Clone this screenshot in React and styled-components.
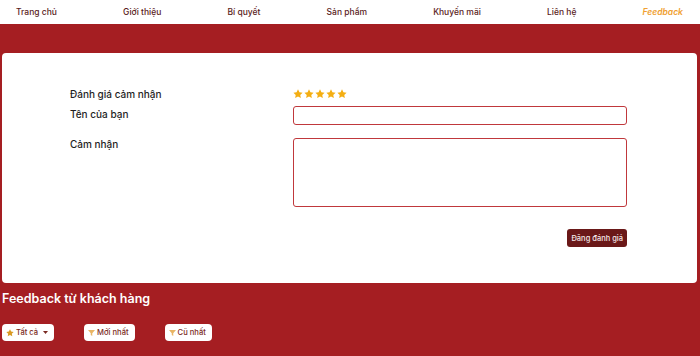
import React from "react";
import styled, { createGlobalStyle } from "styled-components";

const Global = createGlobalStyle`
  html, body { margin: 0; padding: 0; }
  body {
    background: #a51e22;
    font-family: Inter, "Noto Sans", sans-serif;
    min-height: 356px;
  }
  * { box-sizing: border-box; }
`;

const Nav = styled.nav`
  height: 24px;
  background: #fff;
  display: flex;
  align-items: center;
  justify-content: space-between;
  padding: 0 17px 0 16px;
`;

const NavLink = styled.a`
  font-size: 8.5px;
  color: ${(p) => (p.$active ? "#f0a030" : "#5a1c1c")};
  font-style: ${(p) => (p.$active ? "italic" : "normal")};
  font-weight: ${(p) => (p.$active ? 600 : 500)};
  text-decoration: none;
`;

const Main = styled.main`
  padding: 29px 3px 0 2px;
`;

const Card = styled.section`
  background: #fff;
  border-radius: 4px;
  height: 230px;
  padding: 35px 70px 0 68px;
  display: flex;
  flex-direction: column;
`;

const Form = styled.div`
  display: grid;
  grid-template-columns: 223px 1fr;
`;

const Label = styled.div`
  font-size: 10px;
  font-weight: 500;
  color: #1e1e1e;
  line-height: 12px;
  padding-top: ${(p) => p.$top || 0}px;
`;

const Stars = styled.div`
  display: flex;
  align-items: center;
  gap: 1px;
  height: 11px;
  margin-bottom: 7px;
`;

const Input = styled.div`
  height: 19px;
  border: 1px solid #c0383c;
  border-radius: 3px;
  margin-bottom: 13px;
`;

const TextArea = styled.div`
  height: 69px;
  border: 1px solid #c0383c;
  border-radius: 3px;
`;

const Actions = styled.div`
  display: flex;
  justify-content: flex-end;
  margin-top: 22px;
`;

const SubmitButton = styled.button`
  height: 18px;
  padding: 0 4px;
  background: #6a1818;
  color: #f4e8e8;
  font-family: Inter, sans-serif;
  font-size: 7.5px;
  font-weight: 500;
  border: none;
  border-radius: 3px;
`;

const Heading = styled.h2`
  margin: 8px 0 0 0;
  color: #fff;
  font-size: 12.5px;
  font-weight: 600;
  line-height: 16px;
`;

const Filters = styled.div`
  display: flex;
  gap: 30px;
  margin-top: 17px;
`;

const FilterButton = styled.button`
  height: 17px;
  background: #fff;
  border: none;
  border-radius: 4px;
  display: flex;
  align-items: center;
  gap: 2px;
  padding: 0 6px 0 4px;
  font-family: Inter, sans-serif;
  font-size: 7.6px;
  font-weight: 500;
  white-space: nowrap;
  color: #7a2a22;
`;

const CaretWrap = styled.span`
  display: flex;
  margin-left: 3px;
`;

const Star = ({ size = 10, color = "#f4ae12" }) => (
  <svg width={size} height={size} viewBox="0 0 24 24">
    <path
      fill={color}
      d="M12 0.8l3.4 7 7.6 1-5.6 5.3 1.5 7.6L12 18l-6.9 3.7 1.5-7.6L1 8.8l7.6-1z"
    />
  </svg>
);

const Caret = ({ color = "#7a2a22", w = 5 }) => (
  <svg width={w} height={w * 0.6} viewBox="0 0 10 6">
    <path fill={color} d="M0 0h10L5 6z" />
  </svg>
);

const Funnel = () => (
  <svg width="7" height="6" viewBox="0 0 14 12">
    <path fill="#e9b565" d="M0 0h14L8.5 6.5V12L5.5 10V6.5z" />
  </svg>
);

const links = ["Trang chủ", "Giới thiệu", "Bí quyết", "Sản phẩm", "Khuyến mãi", "Liên hệ"];

export default function App() {
  return (
    <>
      <Global />
      <Nav>
        {links.map((l) => (
          <NavLink key={l}>{l}</NavLink>
        ))}
        <NavLink $active>Feedback</NavLink>
      </Nav>
      <Main>
        <Card>
          <Form>
            <Label $top={0}>Đánh giá cảm nhận</Label>
            <Stars>
              {[0, 1, 2, 3, 4].map((i) => (
                <Star key={i} />
              ))}
            </Stars>
            <Label $top={2}>Tên của bạn</Label>
            <Input />
            <Label $top={-1}>Cảm nhận</Label>
            <TextArea />
          </Form>
          <Actions>
            <SubmitButton>Đăng đánh giá</SubmitButton>
          </Actions>
        </Card>
        <Heading>Feedback từ khách hàng</Heading>
        <Filters>
          <FilterButton>
            <Star size={8} color="#d99a22" />
            Tất cả
            <CaretWrap>
              <Caret />
            </CaretWrap>
          </FilterButton>
          <FilterButton>
            <Funnel />
            Mới nhất
          </FilterButton>
          <FilterButton>
            <Funnel />
            Cũ nhất
          </FilterButton>
        </Filters>
      </Main>
    </>
  );
}
